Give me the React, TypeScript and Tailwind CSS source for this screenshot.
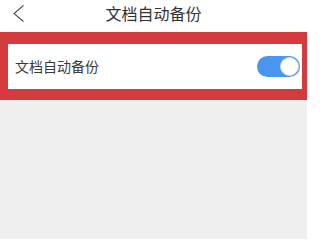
import React from "react";

export default function App() {
  return (
    <div
      className="flex h-[239px] w-[307px] flex-col bg-[#efefef] text-[#333]"
      style={{ fontFamily: '"Noto Sans CJK SC", "Noto Sans", sans-serif' }}
    >
      <header className="relative flex h-[32px] justify-center bg-white pt-[5px]">
        <button className="absolute left-[12px] top-[4px] text-[#555]">
          <svg width="13" height="19" viewBox="0 0 13 19" fill="none">
            <path d="M11.5 1.5 L2 9.5 L11.5 17.5" stroke="currentColor" strokeWidth="1.2" />
          </svg>
        </button>
        <h1 className="text-[16px] leading-none text-[#333]">文档自动备份</h1>
      </header>
      <div className="bg-[#d53b3c] pb-[11px] pl-[8px] pr-[5px] pt-[12px]">
        <div className="flex h-[45px] items-center justify-between bg-white pl-[7px] pr-[2px]">
          <span className="text-[14px] text-[#3a3a3a]">文档自动备份</span>
          <div className="flex h-[21px] w-[43px] items-center justify-end rounded-full bg-[#4a94f2] pr-[1px]">
            <div className="h-[19px] w-[19px] rounded-full border border-[#d9d9d9] bg-white" />
          </div>
        </div>
      </div>
    </div>
  );
}
